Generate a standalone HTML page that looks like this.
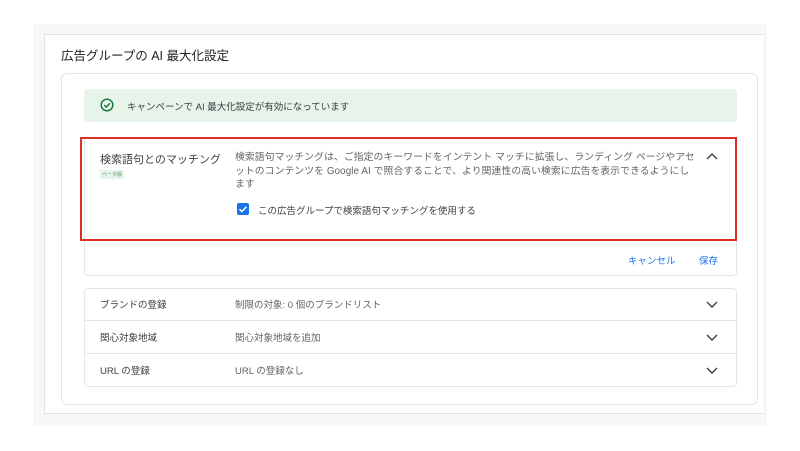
<!DOCTYPE html>
<html><head><meta charset="utf-8"><style>
*{box-sizing:border-box;margin:0;padding:0}
body{width:800px;height:451px;background:#fff;font-family:"Liberation Sans","Noto Sans CJK JP",sans-serif;position:relative;overflow:hidden;color:#3c4043}
.abs{position:absolute}
.bg{left:33px;top:24px;width:734px;height:402px;background:#f6f7f8}
.outer{left:44px;top:34px;width:719px;height:380px;background:#fff;border:1px solid #dfe1e5;border-right:none}
.inner{left:61px;top:73px;width:697px;height:332px;background:#fff;border:1px solid #e3e5e8;border-radius:6px}
.title{left:61px;top:45px;font-size:12.5px;color:#202124}
.banner{left:84px;top:89px;width:653px;height:33px;background:#e6f4ea;border-radius:4px}
.btxt{left:127px;top:99px;font-size:9.5px;color:#3c4043}
.panel{left:84px;top:137px;width:653px;height:139px;border:1px solid #e3e5e8;border-radius:4px}
.red{left:80px;top:137px;width:657px;height:104px;border:2px solid #d93025}
.s{font-size:9.5px;color:#5f6368}
.list{left:84px;top:288px;width:653px;height:99px;border:1px solid #e3e5e8;border-radius:4px}
.sep{left:84px;width:653px;height:1px;background:#e3e5e8}
.link{font-size:9.5px;color:#1a73e8}
.l{font-size:9.5px}
</style></head><body>
<div class="abs bg"></div>
<div class="abs outer"></div>
<div class="abs title">広告グループの AI 最大化設定</div>
<div class="abs inner"></div>
<div class="abs banner"></div>
<svg class="abs" style="left:100px;top:98px" width="14" height="14" viewBox="0 0 14 14"><circle cx="7" cy="7" r="5.8" fill="none" stroke="#137333" stroke-width="1.4"/><path d="M4.3 7.1l1.9 1.9 3.6-3.6" fill="none" stroke="#137333" stroke-width="1.4"/></svg>
<div class="abs btxt">キャンペーンで AI 最大化設定が有効になっています</div>
<div class="abs panel"></div>
<div class="abs red"></div>
<div class="abs" style="left:100px;top:151px;font-size:11px;color:#3c4043">検索語句とのマッチング</div>
<div class="abs" style="left:100px;top:170px;font-size:5px;color:#5f9e6e;background:#e6f4ea;padding:1px 2px">ベータ版</div>
<div class="abs s" style="left:235px;top:151px;width:462px;line-height:13.5px;font-size:9.8px;letter-spacing:0.1px">検索語句マッチングは、ご指定のキーワードをインテント マッチに拡張し、ランディング ページやアセットのコンテンツを Google AI で照合することで、より関連性の高い検索に広告を表示できるようにします</div>
<svg class="abs" style="left:705px;top:152px" width="14" height="10" viewBox="0 0 14 10"><path d="M2 7l5-5 5 5" fill="none" stroke="#3c4043" stroke-width="1.4"/></svg>
<div class="abs" style="left:237px;top:203px;width:12px;height:12px;background:#1a73e8;border-radius:2px"></div>
<svg class="abs" style="left:237px;top:203px" width="12" height="12" viewBox="0 0 12 12"><path d="M2.5 6.2l2.3 2.3 4.7-4.7" fill="none" stroke="#fff" stroke-width="1.5"/></svg>
<div class="abs s" style="left:258px;top:203px;color:#3c4043">この広告グループで検索語句マッチングを使用する</div>
<div class="abs link" style="left:628px;top:253px">キャンセル</div>
<div class="abs link" style="left:699px;top:253px">保存</div>
<div class="abs list"></div>
<div class="abs sep" style="top:320px"></div>
<div class="abs sep" style="top:353px"></div>
<div class="abs l" style="left:100px;top:297px">ブランドの登録</div>
<div class="abs s" style="left:235px;top:297px">制限の対象: 0 個のブランドリスト</div>
<div class="abs l" style="left:100px;top:330px">関心対象地域</div>
<div class="abs s" style="left:235px;top:330px">関心対象地域を追加</div>
<div class="abs l" style="left:100px;top:363px">URL の登録</div>
<div class="abs s" style="left:235px;top:363px">URL の登録なし</div>
<svg class="abs" style="left:705px;top:299px" width="14" height="10" viewBox="0 0 14 10"><path d="M2 3l5 5 5-5" fill="none" stroke="#3c4043" stroke-width="1.4"/></svg>
<svg class="abs" style="left:705px;top:332px" width="14" height="10" viewBox="0 0 14 10"><path d="M2 3l5 5 5-5" fill="none" stroke="#3c4043" stroke-width="1.4"/></svg>
<svg class="abs" style="left:705px;top:365px" width="14" height="10" viewBox="0 0 14 10"><path d="M2 3l5 5 5-5" fill="none" stroke="#3c4043" stroke-width="1.4"/></svg>
</body></html>
